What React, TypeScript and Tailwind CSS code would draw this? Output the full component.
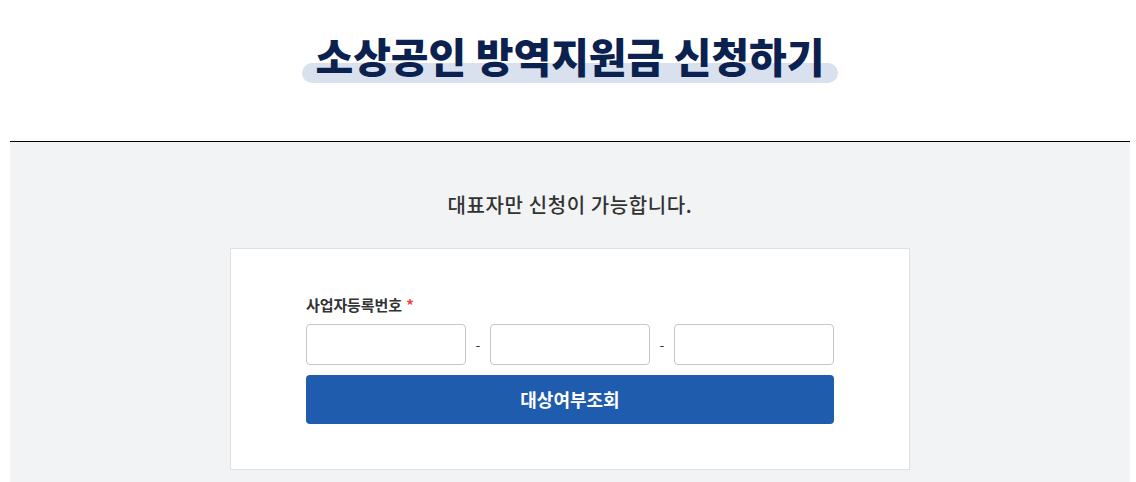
const FONT = "font-['Noto_Sans_CJK_KR','Noto_Sans',sans-serif]";

function BizInput() {
  return (
    <input
      type="text"
      className="h-[41px] w-[160px] rounded-[4px] border border-[#c6c6c6] bg-white px-3 text-[15px] outline-none"
    />
  );
}

function Dash() {
  return <span className="flex w-[24px] justify-center text-[14px] text-[#333]">-</span>;
}

export default function App() {
  return (
    <div className={`min-h-[482px] bg-white ${FONT}`}>
      <header className="flex h-[141px] justify-center pt-[27px] pl-[4px]">
        <div className="relative h-[56px] px-[13px]">
          <span className="absolute bottom-[0px] left-0 right-0 h-[20px] rounded-full bg-[#d9e1ef]" />
          <h1 className="relative text-[41px] font-black leading-[56px] text-[#0b2250]">
            소상공인 방역지원금 신청하기
          </h1>
        </div>
      </header>

      <main className="ml-[10px] w-[1120px] border-t border-black bg-[#f2f3f5] pb-[13px] pt-[48px]">
        <p className="text-center text-[20px] font-medium leading-[30px] tracking-[0.6px] text-[#333]">
          대표자만 신청이 가능합니다.
        </p>

        <section className="mx-auto mt-[28px] w-[680px] border border-[#e0e0e0] bg-white pb-[45px] pt-[45px]">
          <div className="mx-auto w-[528px]">
            <label className="block text-[15px] font-bold leading-[22px] tracking-[-0.1px] text-[#333]">
              사업자등록번호 <span className="ml-[1px] text-[#e9413c]">*</span>
            </label>
            <div className="mt-[8px] flex items-center">
              <BizInput />
              <Dash />
              <BizInput />
              <Dash />
              <BizInput />
            </div>
            <button className="mt-[10px] h-[49px] w-full rounded-[4px] bg-[#1f5cae] text-[18px] font-bold text-white">
              대상여부조회
            </button>
          </div>
        </section>
      </main>
    </div>
  );
}
